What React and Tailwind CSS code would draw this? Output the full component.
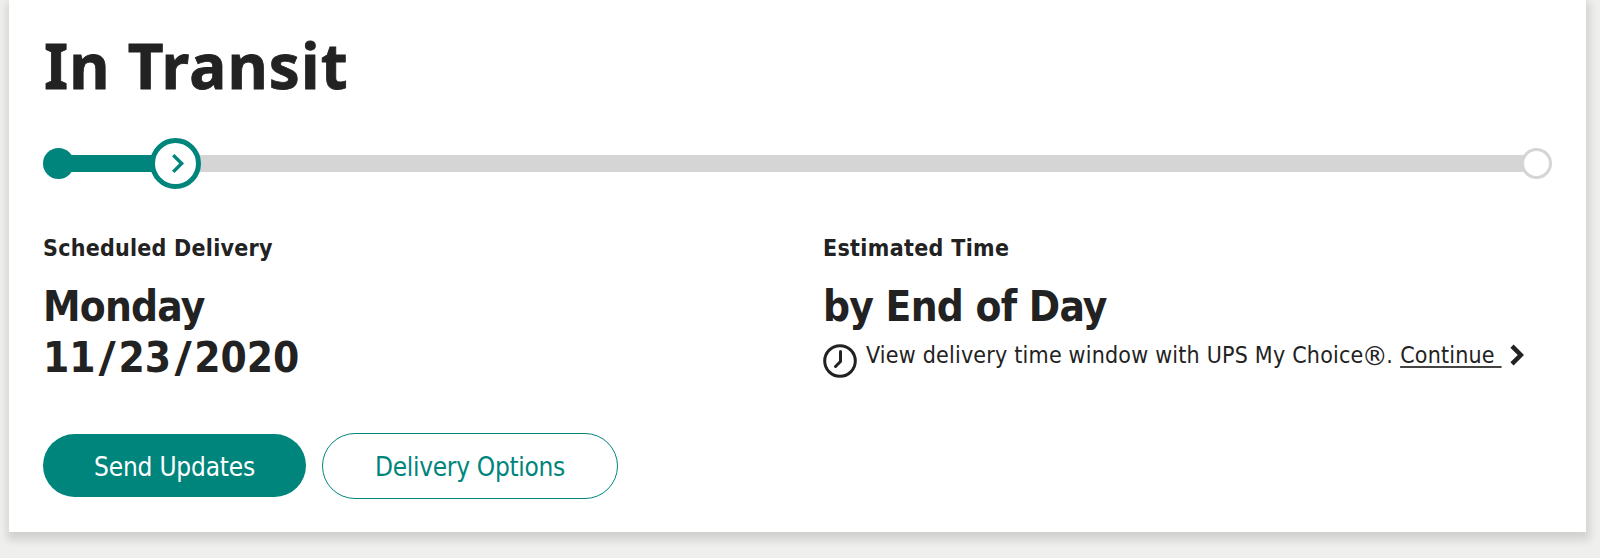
function Chevron({ className, strokeWidth }) {
  return (
    <svg className={className} viewBox="0 0 14 22" fill="none" stroke="currentColor" strokeWidth={strokeWidth}>
      <path d="M2 2.2 L10.8 11 L2 19.8" />
    </svg>
  );
}

function Slash() {
  return <span className="mx-[3.4px] inline-block w-[16.2px] origin-center scale-x-125 text-center">/</span>;
}

function Progress() {
  return (
    <div className="mt-[33px] flex h-[51px] items-center">
      <div className="size-[31px] shrink-0 rounded-full bg-[#00857d]" />
      <div className="-ml-1 h-[17px] w-[82px] shrink-0 bg-[#00857d]" />
      <div className="z-10 -ml-[2px] flex size-[51px] shrink-0 items-center justify-center rounded-full border-5 border-[#00857d] bg-white text-[#00857d]">
        <Chevron className="ml-[4px] h-[21px] w-[14px]" strokeWidth={3.6} />
      </div>
      <div className="-ml-1 h-[17px] grow bg-[#d5d5d5]" />
      <div className="-ml-1 size-[31px] shrink-0 rounded-full border-[3px] border-[#d5d5d5] bg-white" />
    </div>
  );
}

export default function App() {
  return (
    <div className="h-[558px] overflow-hidden bg-[#efefed] pr-[14px] pl-[9px] font-['DejaVu_Sans_Condensed','DejaVu_Sans',sans-serif] [font-stretch:condensed] whitespace-nowrap text-[#222]">
      <main className="h-[532px] bg-white pt-[23px] pr-[34px] pl-[34px] shadow-[1px_5px_8px_3px_rgba(0,0,0,0.12)]">
        <h1 className="h-[82px] pl-px font-['Noto_Sans',sans-serif] text-[62px] leading-[85px] font-bold tracking-[1.1px] [-webkit-text-stroke:0.8px_#222] [font-stretch:normal]">In Transit</h1>
        <Progress />
        <div className="mt-[43px] grid grid-cols-[780px_1fr]">
          <section>
            <h2 className="text-[23px] leading-[32px] font-bold tracking-[0.25px]">Scheduled Delivery</h2>
            <p className="mt-[17px] text-[42px] leading-[51px] font-bold tracking-[-0.8px]">Monday</p>
            <p className="text-[42px] leading-[51px] font-bold">
              11<Slash />23<Slash />2020
            </p>
          </section>
          <section>
            <h2 className="text-[23px] leading-[32px] font-bold tracking-[0.33px]">Estimated Time</h2>
            <p className="mt-[17px] text-[42px] leading-[51px] font-bold tracking-[-0.75px]">by End of Day</p>
            <div className="flex h-[51px] items-start">
              <svg className="mt-[12px] size-[34px] shrink-0" viewBox="0 0 34 34" fill="none" stroke="currentColor" strokeWidth="3">
                <circle cx="17" cy="17" r="15.3" />
                <path d="M17.5 7.5 V17.5 L12.5 22.5" strokeLinecap="round" strokeLinejoin="round" />
              </svg>
              <p className="ml-[9px] text-[23px] leading-[46px] tracking-[0.21px]">
                View delivery time window with UPS My Choice<span className="-mx-[1.7px] align-[-2px] font-['DejaVu_Sans'] text-[26px] leading-none [font-stretch:normal]">®</span>.
              </p>
              <a className="ml-[7px] text-[23px] leading-[46px] tracking-[0.2px] whitespace-pre underline decoration-[#444] decoration-[1.5px] underline-offset-[3px]">{"Continue "}</a>
              <Chevron className="mt-[12px] ml-[8px] h-[22px] w-[14px] shrink-0" strokeWidth={4.5} />
            </div>
          </section>
        </div>
        <div className="mt-[50px] flex items-start gap-[16px]">
          <button className="mt-[1px] h-[63px] w-[263px] rounded-[32px] bg-[#00857d] pt-[4px] text-[26px] tracking-[-0.2px] text-white">Send Updates</button>
          <button className="h-[66px] w-[296px] rounded-[33px] border border-[#00857d] pt-[3px] text-[26px] tracking-[-0.3px] text-[#00857d]">Delivery Options</button>
        </div>
      </main>
    </div>
  );
}
